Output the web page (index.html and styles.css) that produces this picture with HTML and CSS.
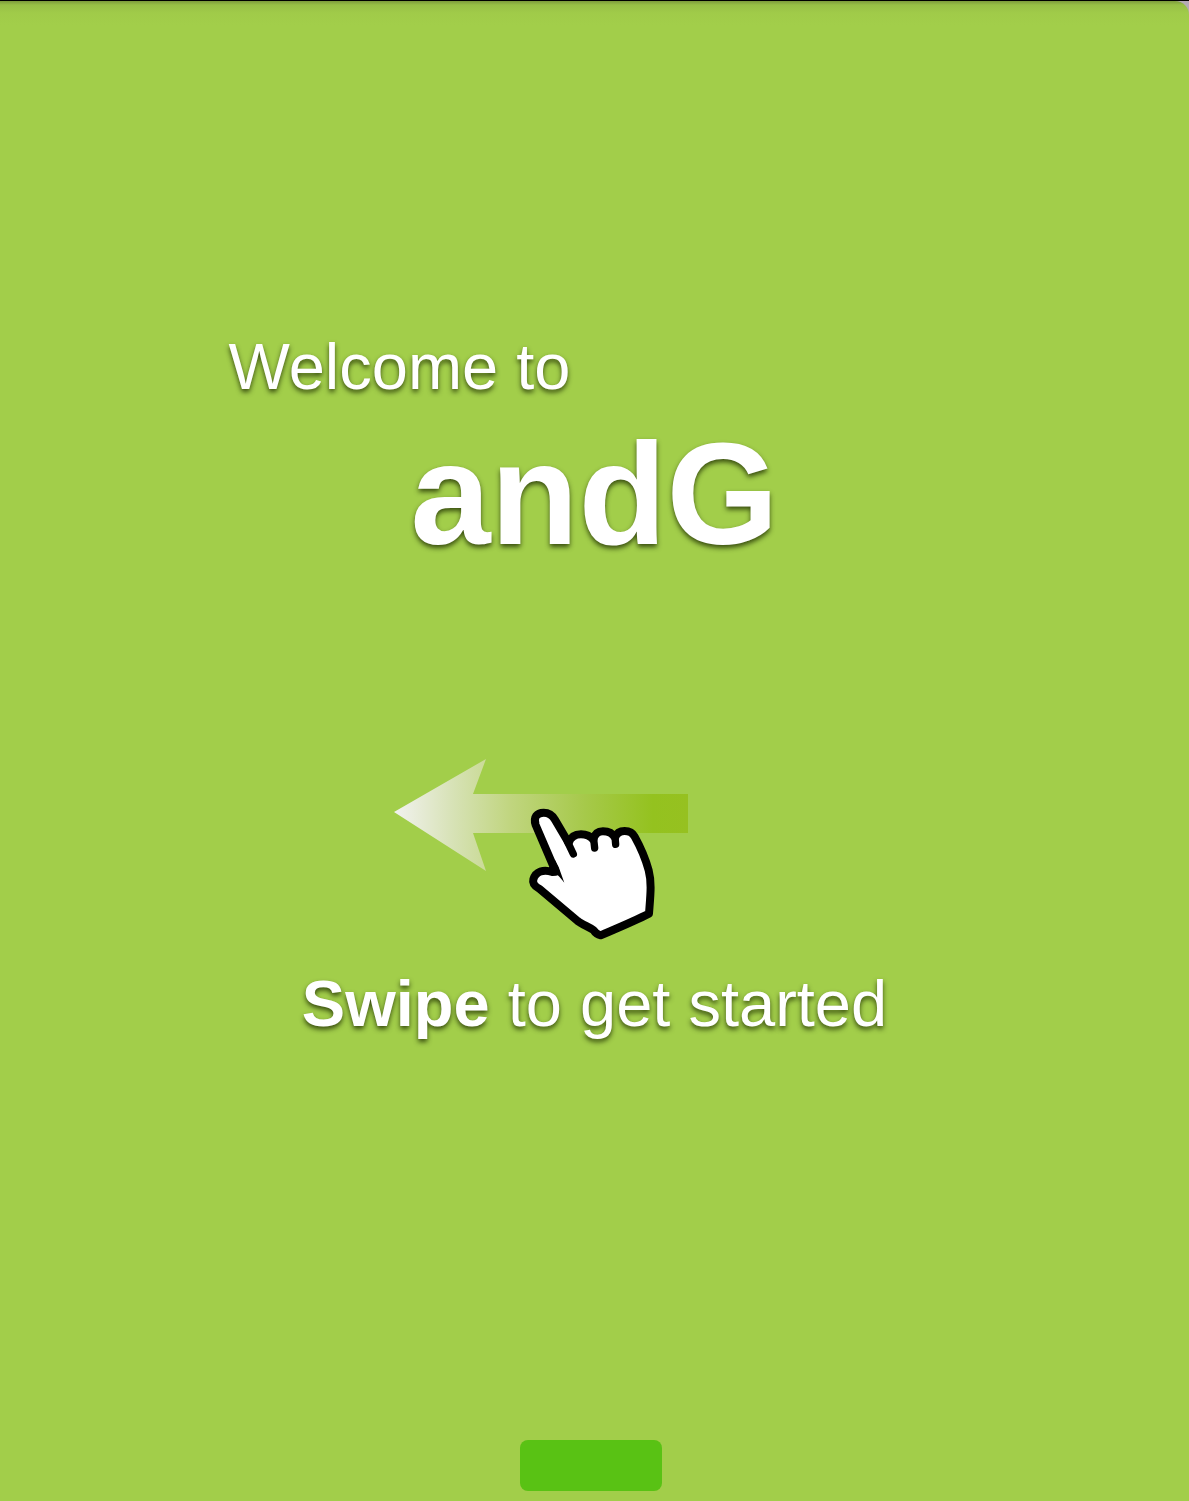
FILE: index.html
```html
<!DOCTYPE html>
<html lang="en">
<head>
<meta charset="utf-8">
<meta name="viewport" content="width=device-width, initial-scale=1">
<title>andG</title>
<link rel="stylesheet" href="styles.css">
</head>
<body>
<main class="screen">
  <section class="intro">
    <h1 class="title">
      <span class="welcome">Welcome to</span>
      <span class="brand">andG</span>
    </h1>
    <svg class="swipe-art" viewBox="394 756 401 186" aria-hidden="true">
      <defs>
        <linearGradient id="fade" gradientUnits="userSpaceOnUse" x1="394" y1="0" x2="688" y2="0">
          <stop offset="0" stop-color="#f2f2f0"/>
          <stop offset="0.2" stop-color="#d7e2b6"/>
          <stop offset="0.4" stop-color="#c0d57e"/>
          <stop offset="0.65" stop-color="#a6c94a"/>
          <stop offset="0.88" stop-color="#94c21f"/>
          <stop offset="1" stop-color="#96c120"/>
        </linearGradient>
      </defs>
      <path fill="url(#fade)" d="M394 812L486 759L473 794H688V833H473L486 871Z"/>
      <g transform="translate(515 795) scale(0.3333)">
        <path fill="#fff" stroke="#000" stroke-width="24" stroke-linejoin="round" stroke-linecap="round" d="M122 230L62 90C54 66 66 53 86 53C103 53 112 60 120 74L161 144C168 123 182 118 198 118C215 118 227 124 235 134C239 116 249 109 264 109C281 109 294 117 300 128C305 114 315 108 329 108C344 108 353 113 359 125C378 159 391 189 401 226C411 264 406 303 402 356C355 380 306 400 257 421C247 419 240 413 235 405C220 395 201 388 188 378L74 282C59 274 52 264 55 253C62 229 86 222 112 231Z"/>
        <path fill="#000" d="M100 222C122 230 134 246 148 263L131 216L120 195Z"/>
        <path fill="none" stroke="#000" stroke-width="22" stroke-linecap="round" d="M157 139L175 177M236 132L239 159M300 124L302 148"/>
      </g>
    </svg>
    <p class="hint"><strong>Swipe</strong> to get started</p>
  </section>
  <footer class="footer">
    <button class="action" type="button" aria-label="Continue"></button>
  </footer>
</main>
</body>
</html>
```
FILE: styles.css
```css
* {
  box-sizing: border-box;
}

body {
  margin: 0;
  border-top: 1px solid #000;
  background: #b5abb5;
  font-family: "Liberation Sans", Arial, sans-serif;
  color: #fff;
}

.screen {
  display: flex;
  flex-direction: column;
  min-height: calc(100vh - 1px);
  border-top-right-radius: 14px;
  background: linear-gradient(#7d9b3c 0, #98c046 4px, #a0cb49 12px, #a2ce4a 24px);
}

.intro {
  flex: 1;
  display: flex;
  flex-direction: column;
  align-items: center;
  width: 100%;
  max-width: 732px;
  margin: 0 auto;
  padding-top: 330px;
  text-shadow: 0 3px 5px rgba(30, 45, 0, 0.8);
}

.title {
  display: flex;
  flex-direction: column;
  gap: 12px;
  width: 100%;
  margin: 0;
}

.welcome {
  font-size: 65px;
  line-height: 72px;
  font-weight: 400;
}

.brand {
  font-size: 144px;
  line-height: 160px;
  font-weight: 700;
  text-align: center;
}

.swipe-art {
  width: 100%;
  max-width: 401px;
  margin-top: 181px;
}

.hint {
  margin: 26px 0;
  font-size: 65px;
  line-height: 72px;
  text-align: center;
}

.footer {
  display: flex;
  justify-content: center;
  padding: 0 8px 10px 0;
}

.action {
  width: 142px;
  height: 51px;
  border: 0;
  border-radius: 8px;
  background: #59c214;
}
```
